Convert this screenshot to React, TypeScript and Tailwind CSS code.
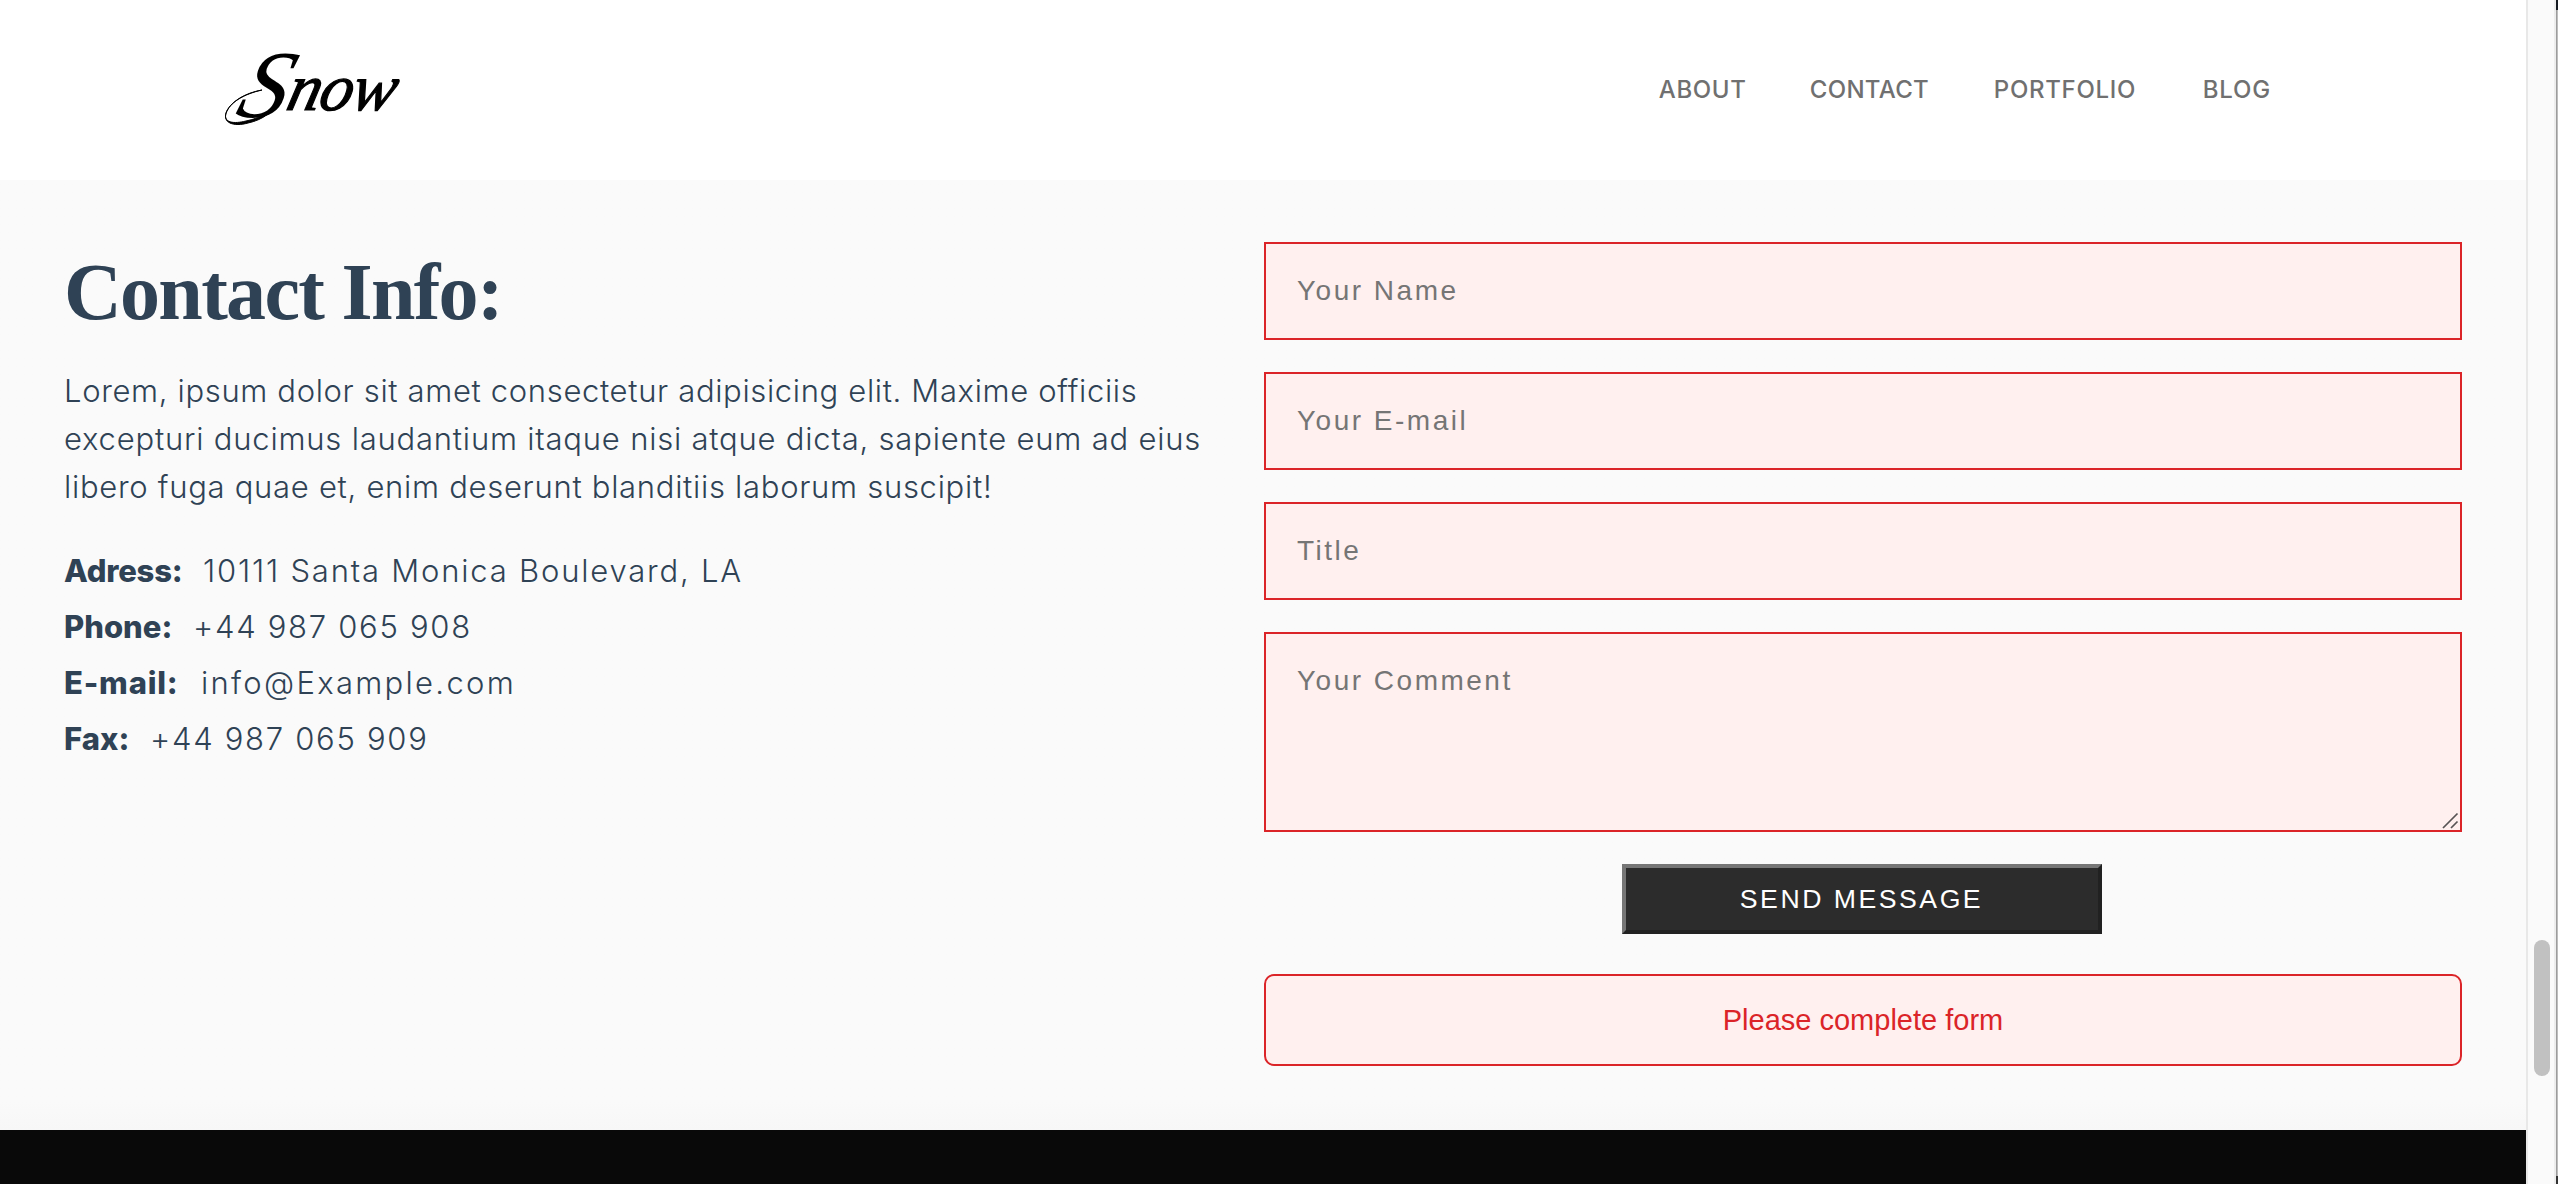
const navItems = [
  { label: "ABOUT", style: "w-[151px] tracking-[0.6px]" },
  { label: "CONTACT", style: "w-[184px] tracking-[0.3px]" },
  { label: "PORTFOLIO", style: "w-[209px] tracking-[0.7px]" },
  { label: "BLOG", style: "tracking-[0.8px]" },
];

const contactRows = [
  { label: "Adress:", labelStyle: "w-[139px] tracking-[-0.2px]", value: "10111 Santa Monica Boulevard, LA", valueStyle: "tracking-[1.8px]" },
  { label: "Phone:", labelStyle: "w-[129px] tracking-[0px]", value: "+44 987 065 908", valueStyle: "tracking-[1.7px]" },
  { label: "E-mail:", labelStyle: "w-[137px] tracking-[0.8px]", value: "info@Example.com", valueStyle: "tracking-[2.3px]" },
  { label: "Fax:", labelStyle: "w-[86px] tracking-[0px]", value: "+44 987 065 909", valueStyle: "tracking-[1.7px]" },
];

const field =
  "block w-full border-2 border-[#db2428] bg-[#fff0ef] px-[31px] text-[28px] leading-8 tracking-[2.5px] text-[#333] outline-none placeholder:text-[#757575]";

function Logo() {
  return (
    <a className="relative block h-[90px] w-[180px] font-['Liberation_Serif'] text-black italic" aria-label="Snow">
      <svg className="absolute left-0 top-[44px]" width="64" height="36" viewBox="0 0 64 36" fill="none" aria-hidden="true">
        <path
          d="M37 1C19 5 4 14 1 24C-2 34 9 35 21 32C37 29 50 20 57 7C50 23 37 31 23 34C9 38 -4 34 2 22C7 12 20 4 37 1Z"
          fill="#000"
          stroke="#000"
          strokeWidth="1"
        />
      </svg>
      <span className="absolute left-[19px] top-[-8px] -skew-x-[18deg] text-[96px] leading-[96px]">S</span>
      <span className="absolute left-[65px] top-[3px] -skew-x-[14deg] text-[66px] leading-[80px] tracking-[-1px] [-webkit-text-stroke:1.2px_#000]">now</span>
    </a>
  );
}

function Header() {
  return (
    <header className="flex h-[180px] items-center justify-between bg-white pl-[225px] pr-[255px]">
      <Logo />
      <nav className="flex text-[24px] font-medium leading-8 text-[#707070]">
        {navItems.map((n) => (
          <a key={n.label} className={n.style}>{n.label}</a>
        ))}
      </nav>
    </header>
  );
}

function ContactInfo() {
  return (
    <section className="pt-[64px] text-[31px] font-light text-[#2f4255]">
      <h1 className="font-['Liberation_Serif'] text-[80px] font-bold leading-[96px] tracking-[-1.7px] whitespace-nowrap">Contact Info:</h1>
      <p className="mt-[27px] leading-[48px] whitespace-nowrap">
        <span className="block tracking-[0.65px]">Lorem, ipsum dolor sit amet consectetur adipisicing elit. Maxime officiis</span>
        <span className="block tracking-[0.79px]">excepturi ducimus laudantium itaque nisi atque dicta, sapiente eum ad eius</span>
        <span className="block tracking-[0.71px]">libero fuga quae et, enim deserunt blanditiis laborum suscipit!</span>
      </p>
      <ul className="mt-8">
        {contactRows.map((r) => (
          <li key={r.label} className="flex h-14 items-center whitespace-nowrap">
            <span className={"shrink-0 font-extrabold " + r.labelStyle}>{r.label}</span>
            <span className={r.valueStyle}>{r.value}</span>
          </li>
        ))}
      </ul>
    </section>
  );
}

function ContactForm() {
  return (
    <form className="flex flex-col gap-8 pt-[62px] font-['Liberation_Sans']">
      <input className={field + " h-[98px]"} placeholder="Your Name" />
      <input className={field + " h-[98px]"} placeholder="Your E-mail" />
      <input className={field + " h-[98px]"} placeholder="Title" />
      <div className="relative">
        <textarea className={field + " h-[200px] resize-none py-[31px]"} placeholder="Your Comment" />
        <svg className="absolute bottom-[3px] right-[3px]" width="17" height="17" viewBox="0 0 17 17" stroke="#575455" strokeWidth="1.7" fill="none" aria-hidden="true">
          <path d="M1 16 15.5 1.5M9 16 15.5 9.5" />
        </svg>
      </div>
      <button
        type="button"
        className="mr-[3px] h-[70px] w-[480px] self-center border-4 border-t-[#767676] border-l-[#767676] border-r-[#212121] border-b-[#212121] bg-[#2c2c2c] text-[26.67px] leading-8 tracking-[2.5px] text-white"
      >
        SEND MESSAGE
      </button>
      <div className="mt-2 flex h-[92px] items-center justify-center rounded-[10px] border-2 border-[#db2428] bg-[#fff0ef] text-[29px] leading-8 text-[#db2428]">
        Please complete form
      </div>
    </form>
  );
}

function Scrollbar() {
  return (
    <aside className="flex h-full w-8 shrink-0" aria-hidden="true">
      <div className="w-[30px] border-l-2 border-r-2 border-l-[#e8e8e8] border-r-[#ededed] bg-[#fafafa] pl-1.5 pt-[940px]">
        <div className="h-[136px] w-4 rounded-full bg-[#c1c1c1]" />
      </div>
      <div className="flex w-0.5 flex-col">
        <div className="h-2.5 bg-[#161b22]" />
        <div className="flex-1 border-l border-[#9c9c9c] bg-[#bdbdbd]" />
        <div className="h-2 bg-[#333]" />
      </div>
    </aside>
  );
}

export default function App() {
  return (
    <div className="flex h-[1184px] w-[2558px] overflow-hidden bg-[#fafafa] font-[Inter] antialiased">
      <div className="flex w-[2526px] flex-col">
        <Header />
        <main className="grid h-[950px] grid-cols-[1136px_1198px] gap-16 bg-[#fafafa] bg-linear-to-t from-[#f7f7f7] to-[#fafafa] to-3% px-16">
          <ContactInfo />
          <ContactForm />
        </main>
        <footer className="flex-1 bg-[#090909]" />
      </div>
      <Scrollbar />
    </div>
  );
}
